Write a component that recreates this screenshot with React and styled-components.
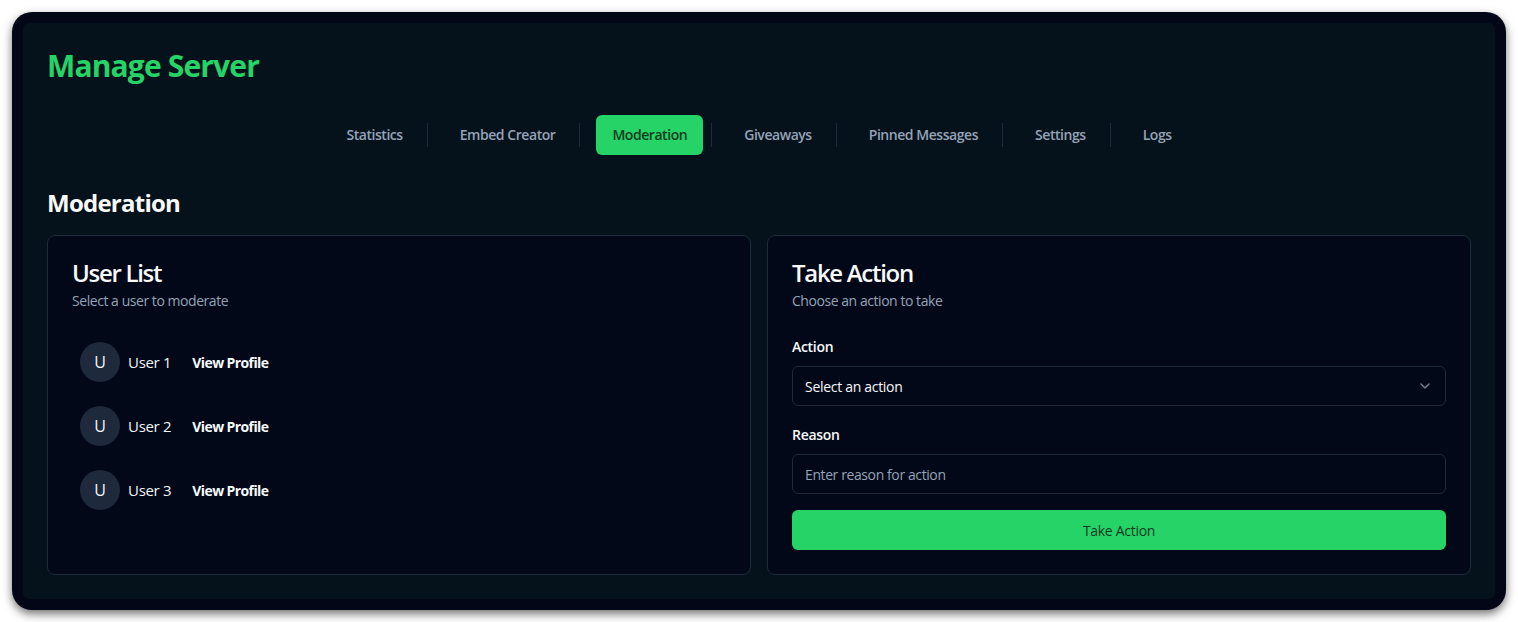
import React from "react";
import styled, { createGlobalStyle } from "styled-components";
import { ChevronDown } from "lucide-react";

const Global = createGlobalStyle`
  html, body { margin: 0; padding: 0; background: #ffffff; }
  body { font-family: "Open Sans", "Noto Sans", sans-serif; -webkit-font-smoothing: antialiased; }
  * { box-sizing: border-box; }
`;

const Frame = styled.div`
  margin: 12px;
  padding: 11px;
  background: #020617;
  border-radius: 20px;
  box-shadow: 0 4px 10px rgba(0, 0, 0, 0.55);
`;

const Panel = styled.div`
  background: #06121b;
  border-radius: 6px;
  padding: 24px;
`;

const Title = styled.h1`
  margin: 0 0 32px;
  font-size: 30px;
  line-height: 36px;
  font-weight: 700;
  color: #25d366;
  letter-spacing: -0.85px;
  position: relative;
  top: 1px;
`;

const Tabs = styled.nav`
  display: flex;
  justify-content: center;
  align-items: center;
  height: 40px;
`;

const Tab = styled.div`
  height: 40px;
  display: flex;
  align-items: center;
  padding: 0 16px 1px;
  border-radius: 6px;
  font-size: 14px;
  font-weight: 600;
  letter-spacing: -0.45px;
  color: ${(p) => (p.$active ? "#0f3b22" : "#94a3b8")};
  background: ${(p) => (p.$active ? "#25d366" : "transparent")};
`;

const Sep = styled.div`
  width: 1px;
  height: 24px;
  background: #1e293b;
  margin: 0 16px 0 8px;
`;

const SectionTitle = styled.h2`
  margin: 32px 0 16px;
  font-size: 24px;
  line-height: 32px;
  font-weight: 700;
  color: #f8fafc;
  letter-spacing: -0.75px;
`;

const Grid = styled.div`
  display: grid;
  grid-template-columns: 1fr 1fr;
  gap: 16px;
`;

const Card = styled.section`
  background: #020817;
  border: 1px solid #1e293b;
  border-radius: 8px;
  color: #f8fafc;
`;

const CardHeader = styled.div`
  padding: 24px;
  display: flex;
  flex-direction: column;
  gap: 6px;
`;

const CardTitle = styled.h3`
  margin: 0;
  font-size: 24px;
  line-height: 25px;
  font-weight: 600;
  letter-spacing: -1.3px;
  color: #f8fafc;
`;

const CardDesc = styled.p`
  margin: 0;
  font-size: 14px;
  line-height: 19px;
  color: #94a3b8;
  letter-spacing: -0.45px;
`;

const CardContent = styled.div`
  padding: 0 24px 24px;
`;

const UserList = styled.div`
  display: flex;
  flex-direction: column;
  gap: 8px;
`;

const UserRow = styled.div`
  display: flex;
  align-items: center;
  padding: 8px;
`;

const Avatar = styled.div`
  width: 40px;
  height: 40px;
  border-radius: 50%;
  background: #1e293b;
  display: flex;
  align-items: center;
  justify-content: center;
  font-size: 16px;
  color: #f1f5f9;
  margin-right: 8px;
`;

const UserName = styled.span`
  font-size: 15px;
  color: #f1f5f9;
  letter-spacing: -0.3px;
  margin-right: 21px;
`;

const LinkButton = styled.span`
  font-size: 14px;
  font-weight: 700;
  color: #f8fafc;
  letter-spacing: -0.6px;
`;

const Field = styled.div`
  display: flex;
  flex-direction: column;
  margin-top: ${(p) => p.$mt}px;
`;

const Label = styled.label`
  font-size: 14px;
  line-height: 20px;
  font-weight: 600;
  color: #f8fafc;
  margin-bottom: 9px;
  letter-spacing: -0.3px;
`;

const SelectBox = styled.div`
  height: 40px;
  border: 1px solid #1e293b;
  border-radius: 6px;
  padding: 0 12px;
  display: flex;
  align-items: center;
  justify-content: space-between;
  font-size: 14px;
  color: #f8fafc;
  letter-spacing: -0.3px;
  svg { color: #94a3b8; opacity: 0.8; }
`;

const Input = styled.input`
  height: 40px;
  border: 1px solid #1e293b;
  border-radius: 6px;
  padding: 0 12px;
  background: transparent;
  font-family: inherit;
  font-size: 14px;
  letter-spacing: -0.4px;
  color: #f8fafc;
  outline: none;
  &::placeholder { color: #94a3b8; }
`;

const Submit = styled.button`
  margin-top: 16px;
  width: 100%;
  height: 40px;
  border: none;
  border-radius: 6px;
  background: #25d366;
  color: #0f3b22;
  font-family: inherit;
  font-size: 14px;
  font-weight: 500;
  letter-spacing: -0.3px;
`;

const tabs = ["Statistics", "Embed Creator", "Moderation", "Giveaways", "Pinned Messages", "Settings", "Logs"];
const users = ["User 1", "User 2", "User 3"];

export default function App() {
  return (
    <>
      <Global />
      <Frame>
        <Panel>
          <Title>Manage Server</Title>
          <Tabs>
            {tabs.map((t, i) => (
              <React.Fragment key={t}>
                <Tab $active={t === "Moderation"}>{t}</Tab>
                {i < tabs.length - 1 && <Sep />}
              </React.Fragment>
            ))}
          </Tabs>
          <SectionTitle>Moderation</SectionTitle>
          <Grid>
            <Card>
              <CardHeader>
                <CardTitle>User List</CardTitle>
                <CardDesc>Select a user to moderate</CardDesc>
              </CardHeader>
              <CardContent>
                <UserList>
                  {users.map((u) => (
                    <UserRow key={u}>
                      <Avatar>U</Avatar>
                      <UserName>{u}</UserName>
                      <LinkButton>View Profile</LinkButton>
                    </UserRow>
                  ))}
                </UserList>
              </CardContent>
            </Card>
            <Card>
              <CardHeader>
                <CardTitle>Take Action</CardTitle>
                <CardDesc>Choose an action to take</CardDesc>
              </CardHeader>
              <CardContent>
                <Field $mt={3}>
                  <Label>Action</Label>
                  <SelectBox>
                    <span>Select an action</span>
                    <ChevronDown size={16} strokeWidth={2} />
                  </SelectBox>
                </Field>
                <Field $mt={19}>
                  <Label>Reason</Label>
                  <Input placeholder="Enter reason for action" />
                </Field>
                <Submit>Take Action</Submit>
              </CardContent>
            </Card>
          </Grid>
        </Panel>
      </Frame>
    </>
  );
}
